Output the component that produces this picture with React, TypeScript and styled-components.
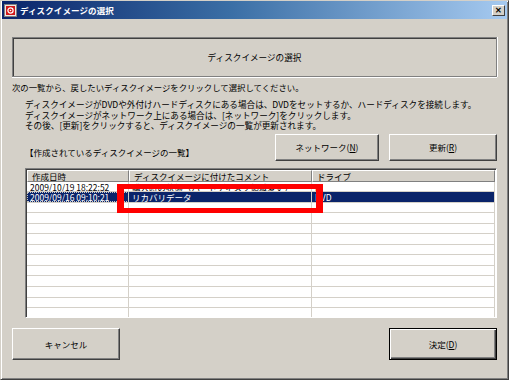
import styled, { createGlobalStyle, css } from 'styled-components';

const GlobalStyle = createGlobalStyle`
	html, body {
		margin: 0;
		padding: 0;
		background: #d4d0c8;
	}
	body {
		font-family: "Noto Sans CJK JP", "Liberation Sans", sans-serif;
		font-size: 8.5px;
		color: #000;
	}
	* {
		box-sizing: border-box;
	}
`;

type Row = { date: string; comment: string; drive: string; selected?: boolean };

const rows: Row[] = [
	{ date: '2009/10/19 18:22:52', comment: '購入時の状態（ハードディスク領域変更）', drive: 'D' },
	{ date: '2009/09/16 09:10:21', comment: 'リカバリデータ', drive: 'DVD', selected: true },
	...Array.from({ length: 11 }, () => ({ date: '', comment: '', drive: '' })),
];

const App = () => {
	return (
		<>
			<GlobalStyle />
			<Window>
				<TitleBar>
					<AppIcon viewBox='0 0 13 13'>
						<rect x='0' y='0' width='13' height='13' fill='#808080' />
						<rect x='1' y='1' width='11' height='11' fill='#e8e8e8' />
						<rect x='2' y='2' width='9' height='9' fill='#d01818' />
						<circle cx='6.5' cy='6.5' r='2.6' fill='none' stroke='#fff' strokeWidth='1.2' />
						<circle cx='6.5' cy='6.5' r='0.8' fill='#fff' />
					</AppIcon>
					<Title>ディスクイメージの選択</Title>
					<CloseButton>✕</CloseButton>
				</TitleBar>

				<Content>
					<HeaderPanel>ディスクイメージの選択</HeaderPanel>

					<Lead>次の一覧から、戻したいディスクイメージをクリックして選択してください。</Lead>

					<Notes>
						<p>ディスクイメージがDVDや外付けハードディスクにある場合は、DVDをセットするか、ハードディスクを接続します。</p>
						<p>ディスクイメージがネットワーク上にある場合は、[ネットワーク]をクリックします。</p>
						<p>その後、[更新]をクリックすると、ディスクイメージの一覧が更新されます。</p>
					</Notes>

					<ListBar>
						<ListLabel>【作成されているディスクイメージの一覧】</ListLabel>
						<Button>
							ネットワーク(<u>N</u>)
						</Button>
						<Button>
							更新(<u>R</u>)
						</Button>
					</ListBar>

					<TableFrame>
						<HeaderRow>
							<HeaderCell>作成日時</HeaderCell>
							<HeaderCell>ディスクイメージに付けたコメント</HeaderCell>
							<HeaderCell>ドライブ</HeaderCell>
						</HeaderRow>
						{rows.map((r, i) => (
							<DataRow key={i} $selected={r.selected}>
								<Cell $focus={r.selected}>{r.date}</Cell>
								<Cell>{r.comment}</Cell>
								<Cell>{r.drive}</Cell>
							</DataRow>
						))}
						<Highlight />
					</TableFrame>

					<Footer>
						<Button $wide>キャンセル</Button>
						<Button $wide $default>
							決定(<u>D</u>)
						</Button>
					</Footer>
				</Content>
			</Window>
		</>
	);
};

const Window = styled.div`
	width: 509px;
	height: 380px;
	background: #d4d0c8;
	border: 1px solid;
	border-color: #d4d0c8 #404040 #404040 #d4d0c8;
	box-shadow: inset 1px 1px #fff, inset -1px -1px #808080;
	padding: 0 1px;
	display: flex;
	flex-direction: column;
`;

const TitleBar = styled.div`
	height: 18px;
	display: flex;
	align-items: center;
	padding: 0 2px 0 2px;
	background: linear-gradient(90deg, #0a246a 0%, #3a6ea5 45%, #a6caf0 100%);
`;

const AppIcon = styled.svg`
	width: 13px;
	height: 13px;
	flex: none;
`;

const Title = styled.span`
	margin-left: 3px;
	color: #fff;
	font-weight: bold;
	font-size: 8.5px;
	letter-spacing: 0.1px;
	flex: 1;
`;

const CloseButton = styled.div`
	width: 13px;
	height: 11px;
	background: #d4d0c8;
	border: 1px solid;
	border-color: #fff #404040 #404040 #fff;
	display: flex;
	align-items: center;
	justify-content: center;
	font-size: 8px;
	font-weight: bold;
	line-height: 1;
	color: #000;
`;

const Content = styled.div`
	flex: 1;
	display: flex;
	flex-direction: column;
	padding: 0 10px 0 10px;
`;

const HeaderPanel = styled.div`
	margin-top: 18px;
	height: 40px;
	border: 1px solid #808080;
	box-shadow: inset 1px 1px #404040, 0 1px #fff, 1px 0 #fff;
	display: flex;
	align-items: center;
	justify-content: center;
	font-size: 8.6px;
`;

const Lead = styled.div`
	margin-top: 5px;
	line-height: 11px;
	font-size: 8.4px;
`;

const Notes = styled.div`
	margin: 6px 0 0 13px;
	p {
		margin: 0;
		line-height: 10.5px;
		font-size: 8.6px;
	}
`;

const ListBar = styled.div`
	margin-top: 3px;
	display: grid;
	grid-template-columns: 1fr 104px 108px;
	column-gap: 10px;
	padding-left: 13px;
`;

const ListLabel = styled.div`
	align-self: end;
	margin-bottom: 3px;
	line-height: 11px;
`;

const Button = styled.div<{ $wide?: boolean; $default?: boolean }>`
	height: ${(p) => (p.$wide ? '32px' : '27px')};
	width: ${(p) => (p.$wide ? '108px' : 'auto')};
	background: #d4d0c8;
	border: 1px solid;
	border-color: #fff #404040 #404040 #fff;
	box-shadow: inset -1px -1px #808080;
	display: flex;
	align-items: center;
	justify-content: center;
	font-size: 8.5px;
	u {
		text-underline-offset: 1px;
	}
	${(p) =>
		p.$default &&
		css`
			border: 1px solid #000;
			box-shadow: inset 1px 1px #fff, inset -1px -1px #404040, inset -2px -2px #808080;
		`}
`;

const TableFrame = styled.div`
	position: relative;
	margin: 7px 0 0 13px;
	height: 150px;
	border: 1px solid;
	border-color: #808080 #fff #fff #808080;
	box-shadow: inset 1px 1px #404040;
	padding: 1px 1px 0 1px;
	background: #fff;
	overflow: hidden;
`;

const columns = '102px 183px 1fr';

const HeaderRow = styled.div`
	display: grid;
	grid-template-columns: ${columns};
	height: 12px;
`;

const HeaderCell = styled.div`
	background: #d4d0c8;
	border: 1px solid;
	border-color: #fff #808080 #808080 #fff;
	padding-left: 4px;
	line-height: 10px;
	font-size: 8.5px;
	white-space: nowrap;
	overflow: hidden;
`;

const DataRow = styled.div<{ $selected?: boolean }>`
	display: grid;
	grid-template-columns: ${columns};
	height: 10.55px;
	border-bottom: 1px solid #d4d0c8;
	background: ${(p) => (p.$selected ? '#0a246a' : '#fff')};
	color: ${(p) => (p.$selected ? '#fff' : '#000')};
`;

const Cell = styled.div<{ $focus?: boolean }>`
	border-right: 1px solid #d4d0c8;
	padding-left: 3px;
	line-height: 10px;
	font-size: 8.5px;
	white-space: nowrap;
	overflow: hidden;
	${(p) =>
		p.$focus &&
		css`
			outline: 1px dotted #c8c8c8;
			outline-offset: -1px;
		`}
`;

const Highlight = styled.div`
	position: absolute;
	left: 91px;
	top: 15px;
	width: 206px;
	height: 29px;
	border: 6px solid #ff0000;
	border-width: 5px 7px 5px 7px;
	pointer-events: none;
`;

const Footer = styled.div`
	margin-top: 10px;
	display: flex;
	justify-content: space-between;
`;

export default App;
